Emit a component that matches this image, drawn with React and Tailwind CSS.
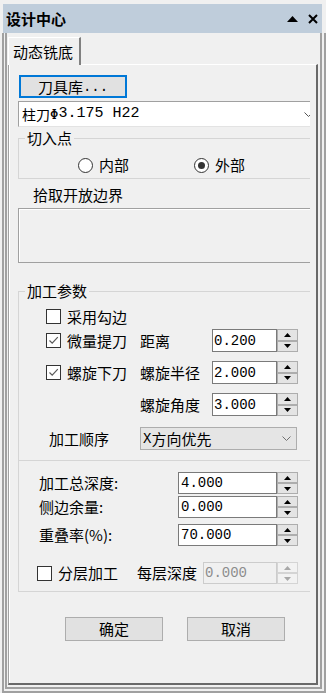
import React from "react";

const MONO = "font-['Liberation_Mono','Noto_Sans_CJK_SC',monospace]";

function SpinBtns({ disabled }) {
  const box = disabled
    ? "flex-1 flex items-center justify-center border border-[#d4d4d4] bg-[#f2f2f2]"
    : "flex-1 flex items-center justify-center border border-[#adadad] bg-[#e4e4e4]";
  const fill = disabled ? "#a8a8a8" : "#000000";
  return (
    <div className="w-[21px] h-full flex flex-col">
      <div className={box}>
        <svg width="7" height="4" viewBox="0 0 7 4">
          <path d="M3.5 0 L7 4 L0 4 Z" fill={fill} />
        </svg>
      </div>
      <div className={box}>
        <svg width="7" height="4" viewBox="0 0 7 4">
          <path d="M0 0 L7 0 L3.5 4 Z" fill={fill} />
        </svg>
      </div>
    </div>
  );
}

function NumField({ value, w, h, pl, disabled }) {
  const field = disabled
    ? "border-[#cccccc] bg-[#f0f0f0] text-[#8c8c8c]"
    : "border-[#7a7a7a] bg-white text-black";
  return (
    <div className={"flex " + h}>
      <div
        className={
          "h-full border flex items-center text-[14px] leading-[20px] " +
          MONO +
          " " +
          field +
          " " +
          w +
          " " +
          pl
        }
      >
        {value}
      </div>
      <SpinBtns disabled={disabled} />
    </div>
  );
}

function Check({ checked }) {
  return (
    <span className="w-[15px] h-[15px] shrink-0 border border-[#333333] bg-white flex items-center justify-center">
      {checked && (
        <svg width="11" height="9" viewBox="0 0 11 9">
          <path d="M1.5 4.5 L4.2 7.2 L9.8 1.2" fill="none" stroke="#5a5a5a" strokeWidth="1.2" />
        </svg>
      )}
    </span>
  );
}

function Radio({ on }) {
  return (
    <span className="w-[15px] h-[15px] shrink-0 rounded-full border border-[#333333] bg-white flex items-center justify-center">
      {on && <span className="w-[7px] h-[7px] rounded-full bg-[#333333]" />}
    </span>
  );
}

export default function App() {
  return (
    <div className="w-[326px] h-[693px] bg-[#f0f0f0] flex flex-col pt-[4px] overflow-hidden select-none text-black text-[15px] leading-[20px] font-['Noto_Sans_CJK_SC',sans-serif]">
      {/* title bar */}
      <div className="ml-[3px] w-[319px] h-[29px] shrink-0 bg-[#bfcddb] flex items-center pl-[3px] pr-[4px]">
        <span className="font-bold text-[15px] leading-[20px]">设计中心</span>
        <div className="ml-auto flex items-center gap-[10px]">
          <svg width="11" height="6" viewBox="0 0 11 6">
            <path d="M5.5 0 L11 6 L0 6 Z" fill="#000" />
          </svg>
          <svg width="10" height="10" viewBox="0 0 10 10">
            <path d="M1 1 L9 9 M9 1 L1 9" stroke="#000" strokeWidth="2" />
          </svg>
        </div>
      </div>

      {/* frame A */}
      <div className="flex-1 ml-[2px] border-l-2 border-r-2 border-b-2 border-[#a0a0a0] pl-[1px] pr-[2px] pb-[2px] flex">
        {/* frame B */}
        <div className="flex-1 border-l-2 border-r-2 border-b-2 border-[#a0a0a0] pl-[1px] pr-[2px] pb-[2px] flex flex-col">
          {/* tab header */}
          <div className="pt-[4px] shrink-0 flex">
            <div className="relative z-10 w-[73px] h-[28px] -mb-[1px] bg-[#f0f0f0] border-t border-l border-t-white border-l-white border-r-2 border-r-[#808080] pl-[4px] flex items-center">
              <span className="text-[15px]">动态铣底</span>
            </div>
          </div>

          {/* tab page */}
          <div className="flex-1 border-t border-t-white border-l border-l-[#a0a0a0] border-r-2 border-r-[#696969] border-b-2 border-b-[#696969] flex">
            <div className="flex-1 border-l border-white flex flex-col">
              <div className="ml-[8px] w-[292px] overflow-hidden flex flex-col shrink-0">
                <button className="mt-[10px] ml-[1px] w-[108px] h-[23px] border-2 border-[#0078d7] bg-[#e1e1e1] flex items-center justify-center leading-[20px]">
                  <span className="text-[15px]">刀具库</span>
                  <span className={"text-[14px] " + MONO}>...</span>
                </button>

                {/* tool combo */}
                <div className={"mt-[3px] w-[300px] h-[26px] shrink-0 bg-white border border-[#a0a0a0] border-b-[#e3e3e3] flex items-center pl-[3px] text-[15px] " + MONO}>
                  <span className="text-[14px] font-['Noto_Sans_CJK_SC',sans-serif]">柱刀</span>
                  <span className="text-[14px] font-['DejaVu_Sans_Mono',monospace]">Φ</span>
                  <span>3.175 H22</span>
                  <svg className="ml-auto mr-[4px]" width="9" height="5" viewBox="0 0 9 5">
                    <path d="M0.5 0.5 L4.5 4.5 L8.5 0.5" fill="none" stroke="#555" strokeWidth="1" />
                  </svg>
                </div>

                {/* 切入点 group */}
                <fieldset className="mt-[1px] w-[300px] shrink-0 border border-[#d5d5d5] pb-[3px]">
                  <legend className="ml-[6px] px-[2px] leading-[20px] text-[15px]">切入点</legend>
                  <div className="mt-[7px] h-[20px] flex items-center pl-[59px]">
                    <div className="w-[116px] flex items-center">
                      <Radio />
                      <span className="ml-[6px]">内部</span>
                    </div>
                    <div className="flex items-center">
                      <Radio on />
                      <span className="ml-[6px]">外部</span>
                    </div>
                  </div>
                </fieldset>

                {/* 拾取开放边界 */}
                <div className="mt-[6px] pl-[15px] h-[20px]">拾取开放边界</div>
                <div className="mt-[3px] w-[300px] h-[55px] shrink-0 border border-[#a0a0a0] shadow-[inset_1px_1px_0_#ffffff] bg-[#f0f0f0]" />

                {/* 加工参数 group */}
                <fieldset className="mt-[18px] w-[300px] shrink-0 border border-[#d5d5d5] pb-[7px]">
                  <legend className="ml-[6px] px-[2px] leading-[20px] text-[15px]">加工参数</legend>

                  <div className="mt-[4px] h-[23px] flex items-center pl-[27px]">
                    <Check />
                    <span className="ml-[6px]">采用勾边</span>
                  </div>

                  <div className="mt-[1px] h-[23px] flex items-center">
                    <div className="w-[121px] pl-[27px] flex items-center">
                      <Check checked />
                      <span className="ml-[6px]">微量提刀</span>
                    </div>
                    <span className="w-[72px]">距离</span>
                    <NumField value="0.200" w="w-[65px]" h="h-[23px]" pl="pl-[1px]" />
                  </div>

                  <div className="mt-[9px] h-[23px] flex items-center">
                    <div className="w-[121px] pl-[27px] flex items-center">
                      <Check checked />
                      <span className="ml-[6px]">螺旋下刀</span>
                    </div>
                    <span className="w-[72px]">螺旋半径</span>
                    <NumField value="2.000" w="w-[65px]" h="h-[23px]" pl="pl-[1px]" />
                  </div>

                  <div className="mt-[9px] h-[23px] flex items-center">
                    <div className="w-[121px]" />
                    <span className="w-[72px]">螺旋角度</span>
                    <NumField value="3.000" w="w-[65px]" h="h-[23px]" pl="pl-[1px]" />
                  </div>

                  <div className="mt-[11px] h-[23px] flex items-center">
                    <span className="w-[121px] pl-[30px]">加工顺序</span>
                    <div className="w-[157px] h-full border border-[#adadad] bg-[#e5e5e5] flex items-center pl-[2px]">
                      <span className={"text-[14px] " + MONO}>X</span>
                      <span>方向优先</span>
                      <svg className="ml-auto mr-[5px]" width="9" height="5" viewBox="0 0 9 5">
                        <path d="M0.5 0.5 L4.5 4.5 L8.5 0.5" fill="none" stroke="#707070" strokeWidth="1" />
                      </svg>
                    </div>
                  </div>

                  <div className="mt-[10px] h-px bg-[#d5d5d5] -ml-px" />

                  <div className="mt-[11px] h-[22px] flex items-center">
                    <span className="w-[159px] pl-[20px]">加工总深度:</span>
                    <NumField value="4.000" w="w-[99px]" h="h-[22px]" pl="pl-[2px]" />
                  </div>

                  <div className="mt-[2px] h-[22px] flex items-center">
                    <span className="w-[159px] pl-[20px]">侧边余量:</span>
                    <NumField value="0.000" w="w-[99px]" h="h-[22px]" pl="pl-[2px]" />
                  </div>

                  <div className="mt-[6px] h-[22px] flex items-center">
                    <span className="w-[159px] pl-[20px]">重叠率(%):</span>
                    <NumField value="70.000" w="w-[99px]" h="h-[22px]" pl="pl-[2px]" />
                  </div>

                  <div className="mt-[16px] h-[22px] flex items-center">
                    <div className="w-[118px] pl-[18px] flex items-center">
                      <Check />
                      <span className="ml-[6px]">分层加工</span>
                    </div>
                    <span className="w-[66px]">每层深度</span>
                    <NumField value="0.000" w="w-[74px]" h="h-[22px]" pl="pl-[1px]" disabled />
                  </div>
                </fieldset>

                {/* buttons */}
                <div className="mt-[25px] flex pl-[47px] gap-[24px]">
                  <button className="w-[98px] h-[24px] border border-[#adadad] bg-[#e1e1e1] flex items-center justify-center text-[15px]">
                    确定
                  </button>
                  <button className="w-[98px] h-[24px] border border-[#adadad] bg-[#e1e1e1] flex items-center justify-center text-[15px]">
                    取消
                  </button>
                </div>
              </div>
            </div>
          </div>
        </div>
      </div>
    </div>
  );
}
